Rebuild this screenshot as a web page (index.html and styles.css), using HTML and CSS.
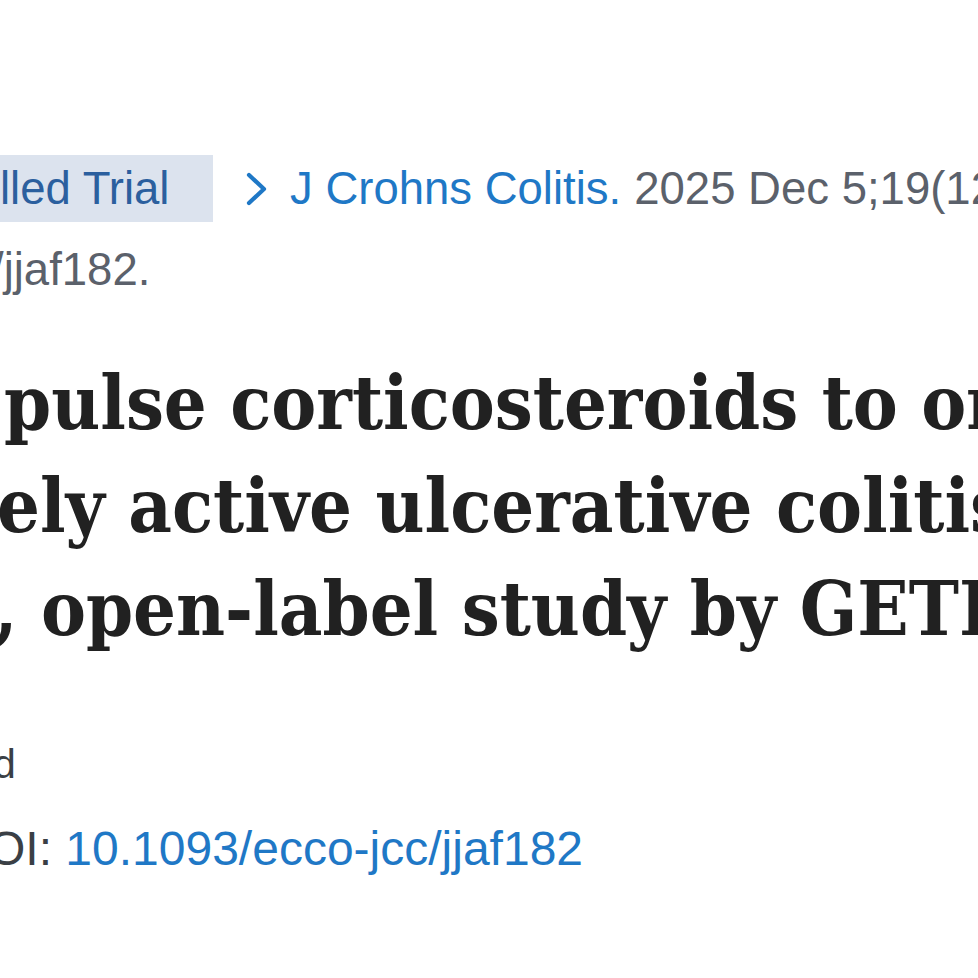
FILE: index.html
```html
<!DOCTYPE html>
<html lang="en">
<head>
<meta charset="utf-8">
<title>PubMed article</title>
<link rel="stylesheet" href="styles.css">
</head>
<body>
<main class="page">
  <div class="citation">
    <div class="cit-row">
      <span class="badge">lled Trial</span>
      <svg class="chev" viewBox="0 0 24 34" aria-hidden="true"><polyline points="4,3 19,17 4,31" fill="none" stroke="#1f78c6" stroke-width="4.2" stroke-linecap="round" stroke-linejoin="round"/></svg>
      <span class="journal">J Crohns Colitis.</span>
      <span class="cit-text">2025 Dec 5;19(12):jjaf182. doi: 10.1093/ecco-jcc</span>
    </div>
    <div class="cit-line2">/jjaf182.</div>
  </div>
  <h1 class="title">
    <span class="tl tl1">pulse corticosteroids to oral</span>
    <span class="tl tl2">ely active ulcerative colitis:</span>
    <span class="tl tl3">, open-label study by GETECCU</span>
  </h1>
  <div class="meta">
    <div class="expand">d</div>
    <div class="ids"><span class="lbl">OI:</span> <a class="doi" href="#">10.1093/ecco-jcc/jjaf182</a></div>
  </div>
</main>
</body>
</html>
```
FILE: styles.css
```css
html, body {
  margin: 0;
  padding: 0;
  background: #ffffff;
  overflow: hidden;
}
.page {
  width: 978px;
  height: 978px;
  overflow: hidden;
  padding-top: 155px;
  box-sizing: border-box;
  font-family: "Liberation Sans", Arial, sans-serif;
}
.citation {
  font-size: 45.5px;
  color: #5b616b;
}
.cit-row {
  display: flex;
  align-items: center;
  white-space: nowrap;
  height: 67px;
}
.badge {
  display: flex;
  align-items: center;
  height: 67px;
  width: 213px;
  box-sizing: border-box;
  background: #dce3ee;
  color: #2b5f9e;
  flex: none;
}
.chev {
  width: 24px;
  height: 34px;
  margin-left: 32px;
  flex: none;
}
.journal {
  color: #1f78c6;
  margin-left: 21px;
}
.cit-text {
  margin-left: 13px;
}
.cit-line2 {
  margin-top: 22px;
  margin-left: -9px;
  line-height: 52px;
  white-space: nowrap;
}
.title {
  margin: 56px 0 0 0;
  font-family: "DejaVu Serif Condensed", "DejaVu Serif", serif;
  font-stretch: condensed;
  font-weight: bold;
  font-size: 75px;
  line-height: 103px;
  color: #212121;
}
.tl {
  display: block;
  white-space: nowrap;
}
.tl1 { margin-left: 4px; }
.tl2 { margin-left: -3px; }
.tl3 { margin-left: -6px; }
.meta {
  margin-top: 77px;
}
.expand {
  font-size: 41px;
  margin-left: -7px;
  line-height: 52px;
  color: #3a3f45;
}
.ids {
  font-size: 48px;
  margin-top: 31px;
  margin-left: -12px;
  line-height: 56px;
  white-space: nowrap;
}
.lbl { color: #3a3f45; }
.doi {
  color: #1f78c6;
  text-decoration: none;
}
```
